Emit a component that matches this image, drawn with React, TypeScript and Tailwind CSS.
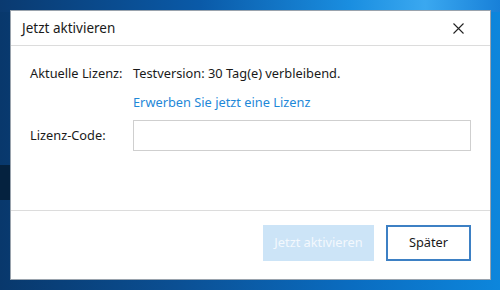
export default function App() {
  return (
    <div
      className="relative h-[290px] w-[500px] overflow-hidden bg-[linear-gradient(90deg,#08386c_0%,#0b4f93_35%,#0a6cc0_70%,#0d86dc_100%)] pt-[10px] pl-[10px]"
      style={{ fontFamily: '"Noto Sans", "Open Sans", sans-serif' }}
    >
      <div className="absolute left-0 top-0 h-[12px] w-[500px] bg-[linear-gradient(90deg,#0a3a70_0%,#0a5aa8_40%,#1a8ee0_70%,#3aa8f0_85%,#1880d8_100%)]" />
      <div className="absolute left-0 top-[165px] h-[35px] w-[12px] bg-[#05223f]" />
      <div className="relative flex h-[270px] w-[481px] flex-col border border-[#9aa3ad] bg-white text-[#1a1a1a]">
        <div className="flex h-[35px] items-center justify-between border-b border-[#dcdcdc] pl-[11px] pr-[26px] text-[13.5px]">
          <span>Jetzt aktivieren</span>
          <svg width="11" height="11" viewBox="0 0 11 11" className="mt-[1px]">
            <path d="M0.5 0.5 L10.5 10.5 M10.5 0.5 L0.5 10.5" stroke="#222" strokeWidth="1.1" />
          </svg>
        </div>
        <div className="flex-1 border-b border-[#dcdcdc] pl-[19px] pr-[19px] pt-[17px] text-[12.8px]">
          <div className="grid grid-cols-[103px_1fr] items-center">
            <div className="h-[20px] leading-[20px]">Aktuelle Lizenz:</div>
            <div className="h-[20px] leading-[20px]">Testversion: 30 Tag(e) verbleibend.</div>
            <div />
            <div className="mt-[9px] h-[20px] leading-[20px] text-[#1e88d8]">Erwerben Sie jetzt eine Lizenz</div>
            <div className="mt-[8px] h-[31px] leading-[31px]">Lizenz-Code:</div>
            <div className="mt-[8px] h-[31px] border border-[#cfcfcf] bg-white" />
          </div>
        </div>
        <div className="flex h-[68px] items-start justify-end gap-[12px] pr-[19px] pt-[14px] text-[12.8px]">
          <button className="h-[36px] w-[111px] bg-[#cce4f7] text-[#f3f8fd]">Jetzt aktivieren</button>
          <button className="h-[36px] w-[85px] border-2 border-[#3d80c4] bg-white text-[#1a1a1a]">Später</button>
        </div>
      </div>
    </div>
  );
}
